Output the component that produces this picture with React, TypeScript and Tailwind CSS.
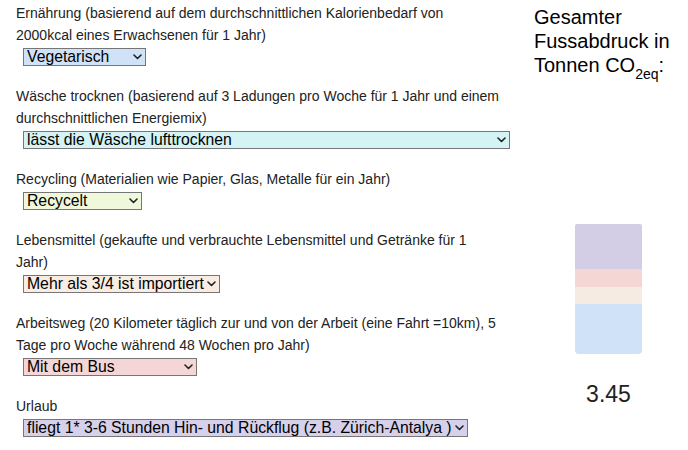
const questions = [
  {
    lines: [
      "Ernährung (basierend auf dem durchschnittlichen Kalorienbedarf von",
      "2000kcal eines Erwachsenen für 1 Jahr)",
    ],
    value: "Vegetarisch",
    width: "w-[123px]",
    bg: "bg-[#d0e2f7]",
  },
  {
    lines: [
      "Wäsche trocknen (basierend auf 3 Ladungen pro Woche für 1 Jahr und einem",
      "durchschnittlichen Energiemix)",
    ],
    value: "lässt die Wäsche lufttrocknen",
    width: "w-[487px]",
    bg: "bg-[#d4f3f5]",
  },
  {
    lines: ["Recycling (Materialien wie Papier, Glas, Metalle für ein Jahr)"],
    value: "Recycelt",
    width: "w-[119px]",
    bg: "bg-[#f0f8dc]",
  },
  {
    lines: [
      "Lebensmittel (gekaufte und verbrauchte Lebensmittel und Getränke für 1",
      "Jahr)",
    ],
    value: "Mehr als 3/4 ist importiert",
    width: "w-[197px]",
    bg: "bg-[#f8ece3]",
  },
  {
    lines: [
      "Arbeitsweg (20 Kilometer täglich zur und von der Arbeit (eine Fahrt =10km), 5",
      "Tage pro Woche während 48 Wochen pro Jahr)",
    ],
    value: "Mit dem Bus",
    width: "w-[174px]",
    bg: "bg-[#f5d6d6]",
  },
  {
    lines: ["Urlaub"],
    value: "fliegt 1* 3-6 Stunden Hin- und Rückflug (z.B. Zürich-Antalya )",
    width: "w-[445px]",
    bg: "bg-[#d6d0ea]",
  },
];

const Chevron = () => (
  <svg
    width="9"
    height="6"
    viewBox="0 0 9 6"
    className="pointer-events-none absolute right-[4px] top-[6px]"
  >
    <path
      d="M1 1 L4.5 4.5 L8 1"
      fill="none"
      stroke="#222"
      strokeWidth="1.6"
      strokeLinecap="round"
      strokeLinejoin="round"
    />
  </svg>
);

const App = () => {
  return (
    <div className="flex w-[688px] h-[450px] bg-white text-[#222] font-['Liberation_Sans',Arial,sans-serif] overflow-hidden">
      {/* Question list */}
      <div className="w-[534px] shrink-0 pl-4 pt-[2px]">
        {questions.map((q) => (
          <div key={q.value} className="mb-[19px]">
            <p className="text-[14px] leading-[22px] whitespace-nowrap">
              {q.lines.map((line, i) => (
                <span key={i} className="block">
                  {line}
                </span>
              ))}
            </p>
            <div className={`relative ml-[7px] mt-[2px] h-[18px] ${q.width}`}>
              <select
                defaultValue={q.value}
                className={`appearance-none block h-[18px] w-full border border-[#767676] ${q.bg} pl-[3px] pr-[12px] text-[15.75px] leading-[16px] text-black font-['Liberation_Sans',Arial,sans-serif] outline-none`}
              >
                <option>{q.value}</option>
              </select>
              <Chevron />
            </div>
          </div>
        ))}
      </div>

      {/* Total footprint */}
      <div className="w-[149px] shrink-0 flex flex-col items-center pt-[5px]">
        <h2 className="self-start text-[20px] leading-[24px] text-black">
          Gesamter
          <br />
          Fussabdruck in
          <br />
          Tonnen CO
          <sub className="text-[14px] align-[-3px] leading-none">2eq</sub>:
        </h2>
        <div className="mt-[147px] w-[67px] flex flex-col rounded-t-[2px] rounded-b-[4px] overflow-hidden">
          <div className="h-[45px] bg-[#d3cde6]" />
          <div className="h-[18px] bg-[#f4d6d5]" />
          <div className="h-[17px] bg-[#f6ebe2]" />
          <div className="h-[50px] bg-[#cfe2f7]" />
        </div>
        <div className="mt-[23px] text-[23px] text-[#222]">3.45</div>
      </div>
    </div>
  );
};

export default App;
